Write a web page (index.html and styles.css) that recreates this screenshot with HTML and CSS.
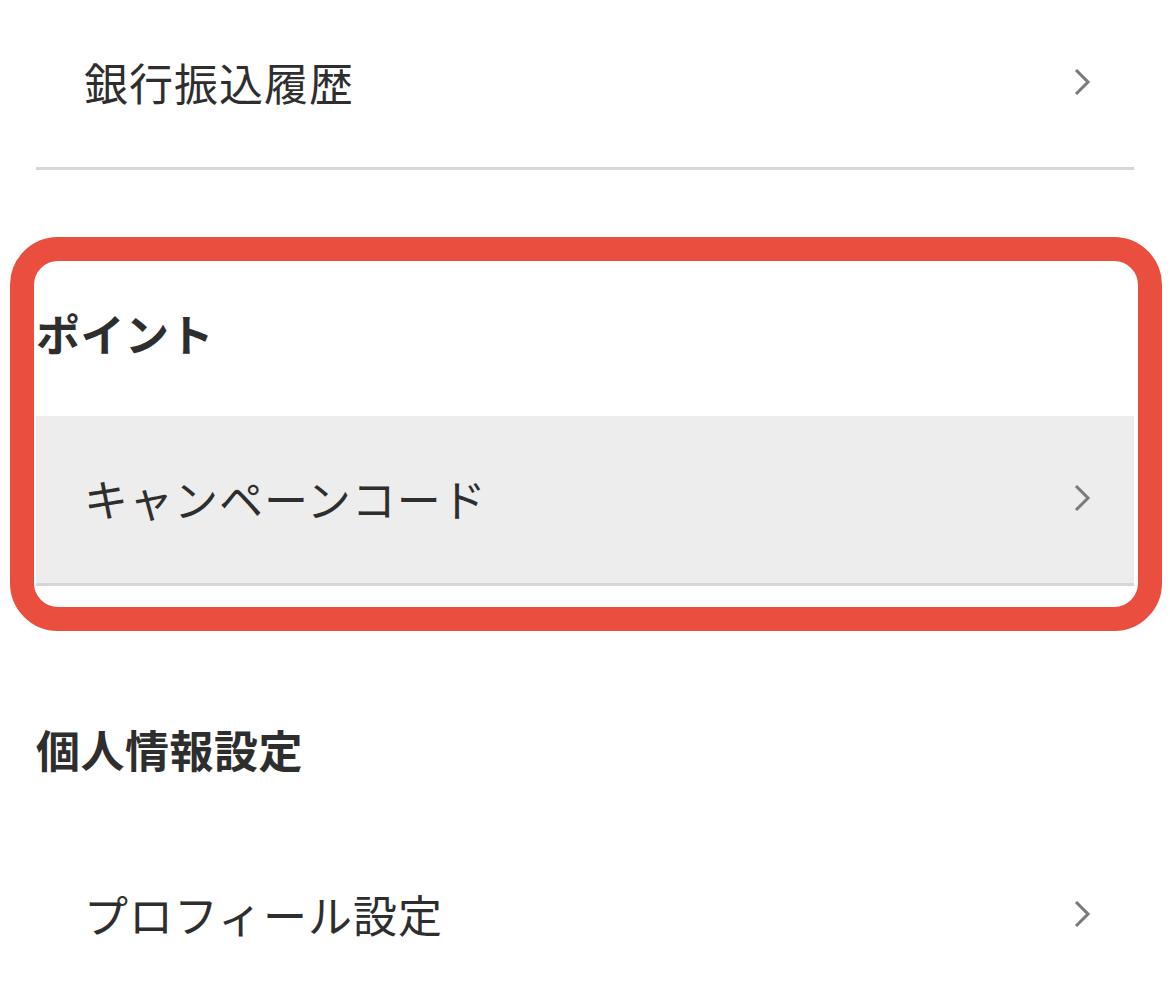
FILE: index.html
```html
<!DOCTYPE html>
<html lang="ja">
<head>
<meta charset="utf-8">
<title>メニュー</title>
<link rel="stylesheet" href="styles.css">
</head>
<body>
<div class="page">
  <div class="menu">
    <a class="row" href="#">
      <span class="row-label">銀行振込履歴</span>
      <svg class="chev" viewBox="0 0 18 28" width="18" height="28"><path d="M3 2 L15 14 L3 26" fill="none" stroke="#7a7a7a" stroke-width="3"/></svg>
    </a>

    <div class="section-title">ポイント</div>
    <a class="row active" href="#">
      <span class="row-label">キャンペーンコード</span>
      <svg class="chev" viewBox="0 0 18 28" width="18" height="28"><path d="M3 2 L15 14 L3 26" fill="none" stroke="#7a7a7a" stroke-width="3"/></svg>
    </a>

    <div class="section-title">個人情報設定</div>
    <a class="row" href="#">
      <span class="row-label">プロフィール設定</span>
      <svg class="chev" viewBox="0 0 18 28" width="18" height="28"><path d="M3 2 L15 14 L3 26" fill="none" stroke="#7a7a7a" stroke-width="3"/></svg>
    </a>
  </div>
  <div class="highlight"></div>
</div>
</body>
</html>
```

FILE: styles.css
```css
* { box-sizing: border-box; }
html, body {
  margin: 0;
  padding: 0;
  background: #ffffff;
}
body {
  font-family: "Noto Sans CJK JP", "Noto Sans", sans-serif;
  color: #2e2e2e;
  overflow: hidden;
}
.page {
  position: relative;
  width: 1170px;
  height: 998px;
}
.menu {
  margin: 0 36px;
  display: flex;
  flex-direction: column;
}
.row {
  display: flex;
  align-items: center;
  justify-content: space-between;
  height: 170px;
  padding: 0 43px 3px 48px;
  border-bottom: 3px solid #d6d6d6;
  text-decoration: none;
  color: #2e2e2e;
}
.row.active {
  background: #ededed;
}
.row-label {
  font-size: 44px;
  line-height: 1;
  font-weight: 400;
  letter-spacing: 1px;
}
.chev {
  display: block;
  flex: none;
}
.section-title {
  height: 246px;
  padding-top: 80px;
  display: flex;
  align-items: center;
  font-size: 44px;
  font-weight: 700;
  line-height: 1;
  letter-spacing: 0.5px;
  color: #2e2e2e;
}
.highlight {
  position: absolute;
  left: 10px;
  top: 237px;
  width: 1152px;
  height: 394px;
  border: 24px solid #e94e3f;
  border-radius: 48px;
  pointer-events: none;
}
```
